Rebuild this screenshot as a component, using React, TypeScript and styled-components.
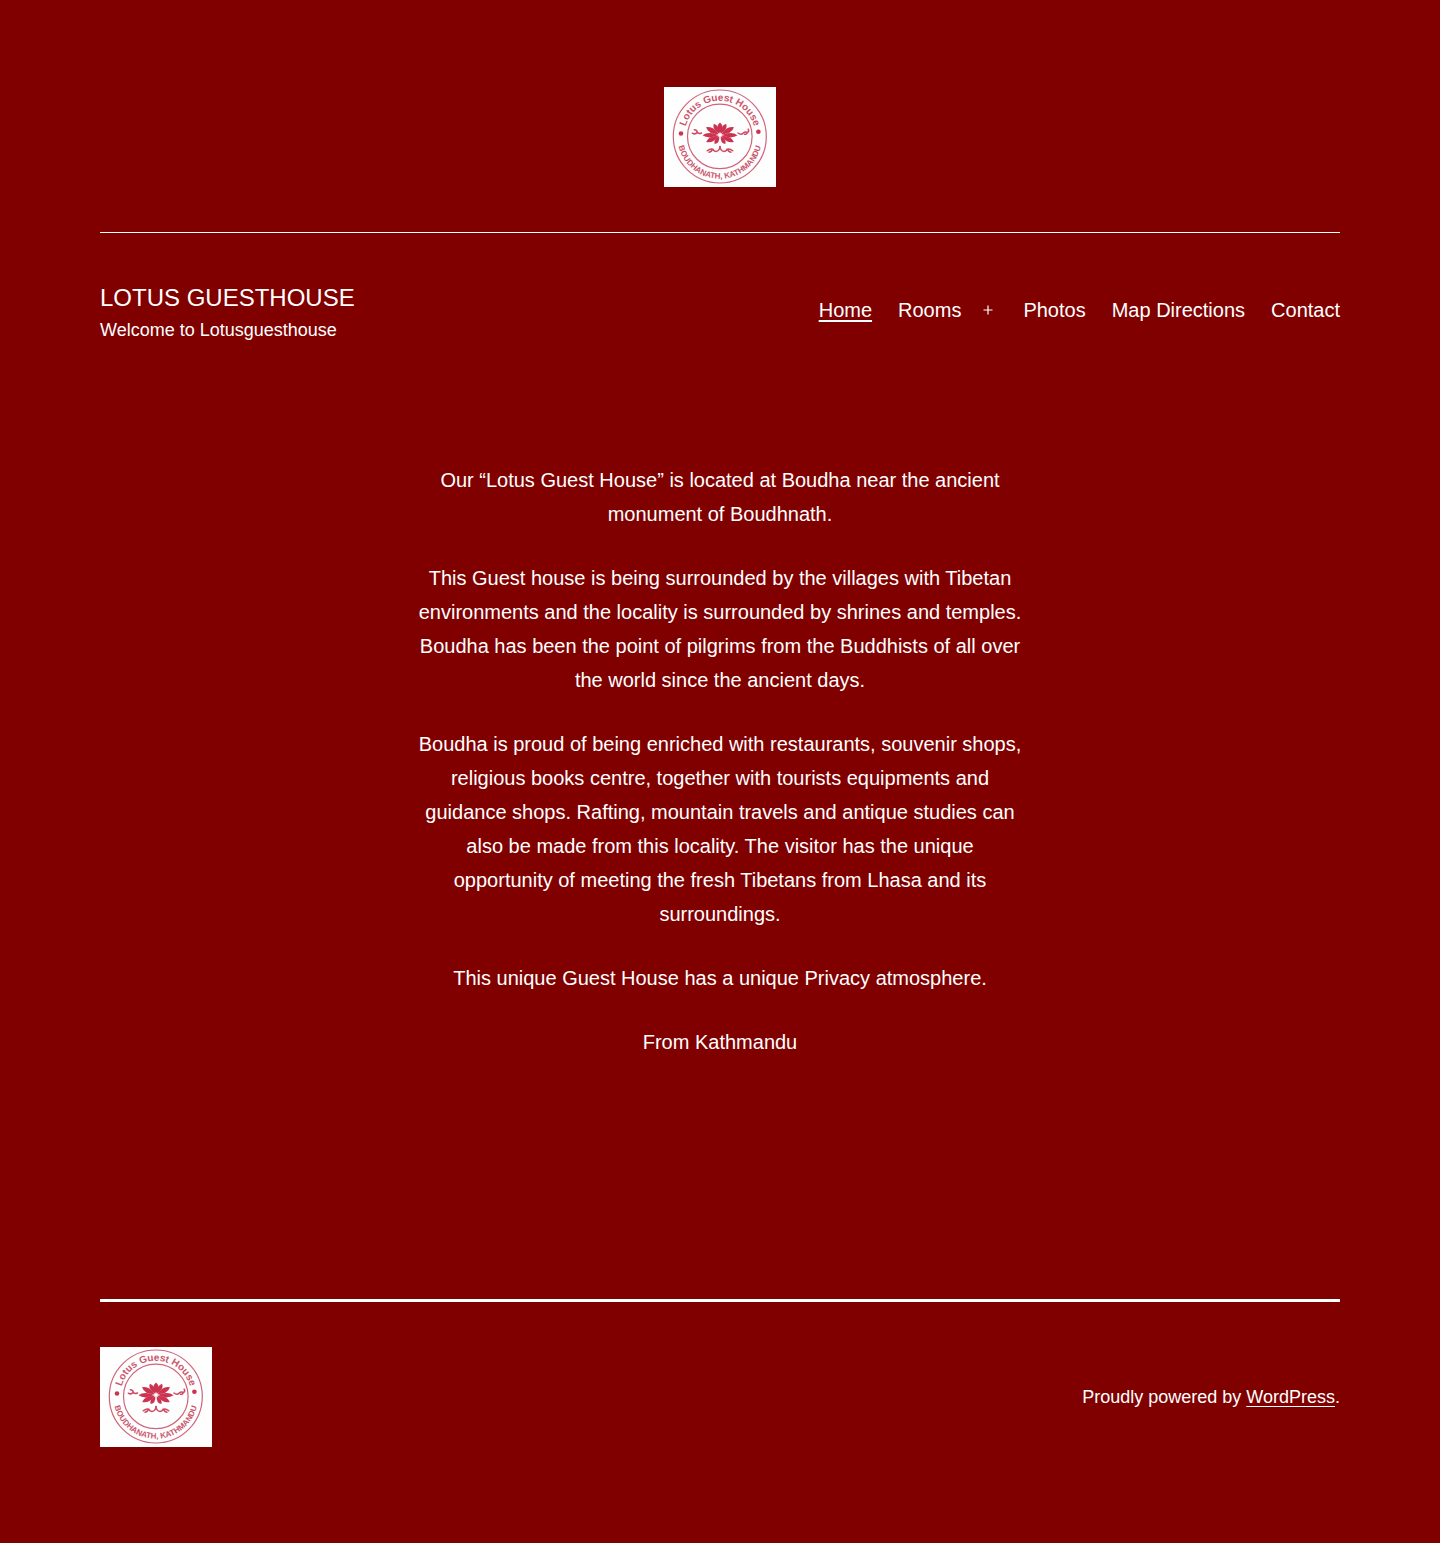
import React, { useId } from 'react';
import styled, { createGlobalStyle } from 'styled-components';

const GlobalStyle = createGlobalStyle`
  *, *::before, *::after { box-sizing: border-box; }
  body {
    margin: 0;
    background: #800000;
    color: #fff;
    font-family: "Liberation Sans", Arial, sans-serif;
    font-size: 20px;
    line-height: 34px;
  }
`;

const Page = styled.div`
  padding: 87px 100px 96px;
  @media (max-width: 900px) {
    padding: 40px 24px;
  }
`;

const LogoBar = styled.div`
  display: flex;
  justify-content: center;
  padding-bottom: 45px;
  border-bottom: 1px solid #fff;
`;

const LogoLink = styled.a`
  display: block;
  width: 112px;
  height: 100px;
`;

const LogoArt = styled.svg`
  display: block;
  width: 100%;
  height: 100%;
  background: #fefefe;
`;

const LogoText = styled.text<{ $size: number }>`
  font-family: "Liberation Sans", Arial, sans-serif;
  font-size: ${(p) => p.$size}px;
  font-weight: 700;
  fill: #cb566c;
`;

const Masthead = styled.div`
  display: flex;
  flex-wrap: wrap;
  justify-content: space-between;
  align-items: center;
  gap: 24px;
  padding: 47px 0 48px;
`;

const Branding = styled.div`
  display: grid;
  gap: 4px;
`;

const SiteTitle = styled.h1`
  margin: 0;
  font-size: 24px;
  font-weight: 400;
  line-height: 36px;
  text-transform: uppercase;
`;

const Tagline = styled.p`
  margin: 0;
  font-size: 18px;
  line-height: 20px;
`;

const Menu = styled.ul`
  display: flex;
  flex-wrap: wrap;
  gap: 26px;
  margin: 0;
  padding: 0;
  list-style: none;
`;

const MenuItem = styled.li`
  display: flex;
  align-items: center;
  gap: 18px;
`;

const MenuLink = styled.a<{ $current?: boolean }>`
  color: #fff;
  text-decoration: ${(p) => (p.$current ? 'underline' : 'none')};
  text-decoration-thickness: 2px;
  text-underline-offset: 3px;
  text-decoration-skip-ink: none;
`;

const SubmenuToggle = styled.button`
  display: flex;
  align-items: center;
  justify-content: center;
  width: 18px;
  height: 34px;
  padding: 0;
  border: 0;
  background: none;
  color: #fff;
  cursor: pointer;
`;

const Article = styled.main`
  max-width: 610px;
  margin: 0 auto;
  padding: 75px 0 240px;
  text-align: center;
`;

const Paragraph = styled.p`
  margin: 0;
  & + & { margin-top: 30px; }
`;

const Footer = styled.footer`
  display: flex;
  flex-wrap: wrap;
  justify-content: space-between;
  align-items: center;
  gap: 24px;
  padding-top: 45px;
  border-top: 3px solid #fff;
`;

const Credit = styled.div`
  font-size: 18px;
`;

const CreditLink = styled.a`
  color: #fff;
  text-decoration: underline;
  text-decoration-thickness: 1px;
  text-underline-offset: 3px;
  text-decoration-skip-ink: none;
`;

const petals = [
  { angle: 0, length: 12.5, width: 5.2 },
  { angle: 29, length: 13, width: 4.2 },
  { angle: 61, length: 16, width: 5 },
  { angle: 91, length: 17.5, width: 4.2 },
  { angle: 117, length: 15.5, width: 4.6 },
  { angle: 150, length: 10.5, width: 4 },
].flatMap((petal) => (petal.angle ? [petal, { ...petal, angle: -petal.angle }] : [petal]));

function Logo() {
  const id = useId();
  return (
    <LogoArt viewBox="0 0 112 100" role="img" aria-label="Lotus Guest House">
      <defs>
        <path id={`${id}top`} d="M20.1 49.5a35.7 35.7 0 0 1 71.4 0" />
        <path id={`${id}bottom`} d="M14 43a42.300 42.300 0 1 0 83.600 0" />
      </defs>
      <g fill="none" stroke="#d0647a" strokeWidth="1.2">
        <circle cx="55.8" cy="49.5" r="46.5" />
        <circle cx="55.8" cy="49.4" r="32.3" />
      </g>
      <LogoText $size={10} textAnchor="middle">
        <textPath href={`#${id}top`} startOffset="50%">Lotus Guest House</textPath>
      </LogoText>
      <LogoText $size={8} textAnchor="middle">
        <textPath href={`#${id}bottom`} startOffset="50%">BOUDHANATH, KATHMANDU</textPath>
      </LogoText>
      <g fill="#cc3350">
        <circle cx="17" cy="46.5" r="2.3" />
        <circle cx="94.4" cy="44.8" r="2.3" />
        {petals.map(({ angle, length, width }) => (
          <path
            key={angle}
            transform={`translate(56 48) rotate(${angle})`}
            d={`M0 -1.500Q${-width} ${-length * 0.66} 0 ${-length}Q${width} ${-length * 0.66} 0 -1.500z`}
          />
        ))}
      </g>
      <g fill="none" stroke="#d04a62" strokeWidth="1.5" strokeLinecap="round" strokeLinejoin="round">
        <path d="M37.500 46q-3 1.500-4.200-.8q-.5-2.500-3-2.500M33.300 45.200q-2.200 2.800-5 1" />
        <path d="M74 46q3 2.500 5.200 0q2-1.800 4.500-.5q1.700-1.200.5-3.300M83.200 45.500q-.5 2.300-2.800 1.700" />
        <path d="M56 59.500q-.5 4.500-4 5q-2.300-.3-3-2.300q-2.700-1-5.800 1.600M48.500 62.200q-.5 2.500-3.500 3" />
        <path d="M56 59.500q.5 4.500 4 5q2.300-.3 3-2.300q2.700-1 5.800 1.600M63.500 62.200q.5 2.500 3.500 3" />
      </g>
    </LogoArt>
  );
}

const menu = [
  { label: 'Home', current: true },
  { label: 'Rooms', submenu: true },
  { label: 'Photos' },
  { label: 'Map Directions' },
  { label: 'Contact' },
];

const paragraphs = [
  'Our “Lotus Guest House” is located at Boudha near the ancient monument of Boudhnath.',
  'This Guest house is being surrounded by the villages with Tibetan environments and the locality is surrounded by shrines and temples. Boudha has been the point of pilgrims from the Buddhists of all over the world since the ancient days.',
  'Boudha is proud of being enriched with restaurants, souvenir shops, religious books centre, together with tourists equipments and guidance shops. Rafting, mountain travels and antique studies can also be made from this locality. The visitor has the unique opportunity of meeting the fresh Tibetans from Lhasa and its surroundings.',
  'This unique Guest House has a unique Privacy atmosphere.',
  'From Kathmandu',
];

export default function App() {
  return (
    <Page>
      <GlobalStyle />
      <header>
        <LogoBar>
          <LogoLink href="#"><Logo /></LogoLink>
        </LogoBar>
        <Masthead>
          <Branding>
            <SiteTitle>Lotus Guesthouse</SiteTitle>
            <Tagline>Welcome to Lotusguesthouse</Tagline>
          </Branding>
          <nav aria-label="Primary menu">
            <Menu>
              {menu.map((item) => (
                <MenuItem key={item.label}>
                  <MenuLink href="#" $current={item.current} aria-current={item.current ? 'page' : undefined}>
                    {item.label}
                  </MenuLink>
                  {item.submenu && (
                    <SubmenuToggle type="button" aria-label="Open menu" aria-expanded="false">
                      <svg width="18" height="18" viewBox="0 0 24 24" aria-hidden="true">
                        <path fill="currentColor" fillRule="evenodd" d="M18 11.200h-5.200V6h-1.600v5.200H6v1.600h5.200V18h1.600v-5.200H18z" />
                      </svg>
                    </SubmenuToggle>
                  )}
                </MenuItem>
              ))}
            </Menu>
          </nav>
        </Masthead>
      </header>
      <Article>
        {paragraphs.map((text) => (
          <Paragraph key={text}>{text}</Paragraph>
        ))}
      </Article>
      <Footer>
        <LogoLink href="#"><Logo /></LogoLink>
        <Credit>
          Proudly powered by <CreditLink href="#">WordPress</CreditLink>.
        </Credit>
      </Footer>
    </Page>
  );
}
